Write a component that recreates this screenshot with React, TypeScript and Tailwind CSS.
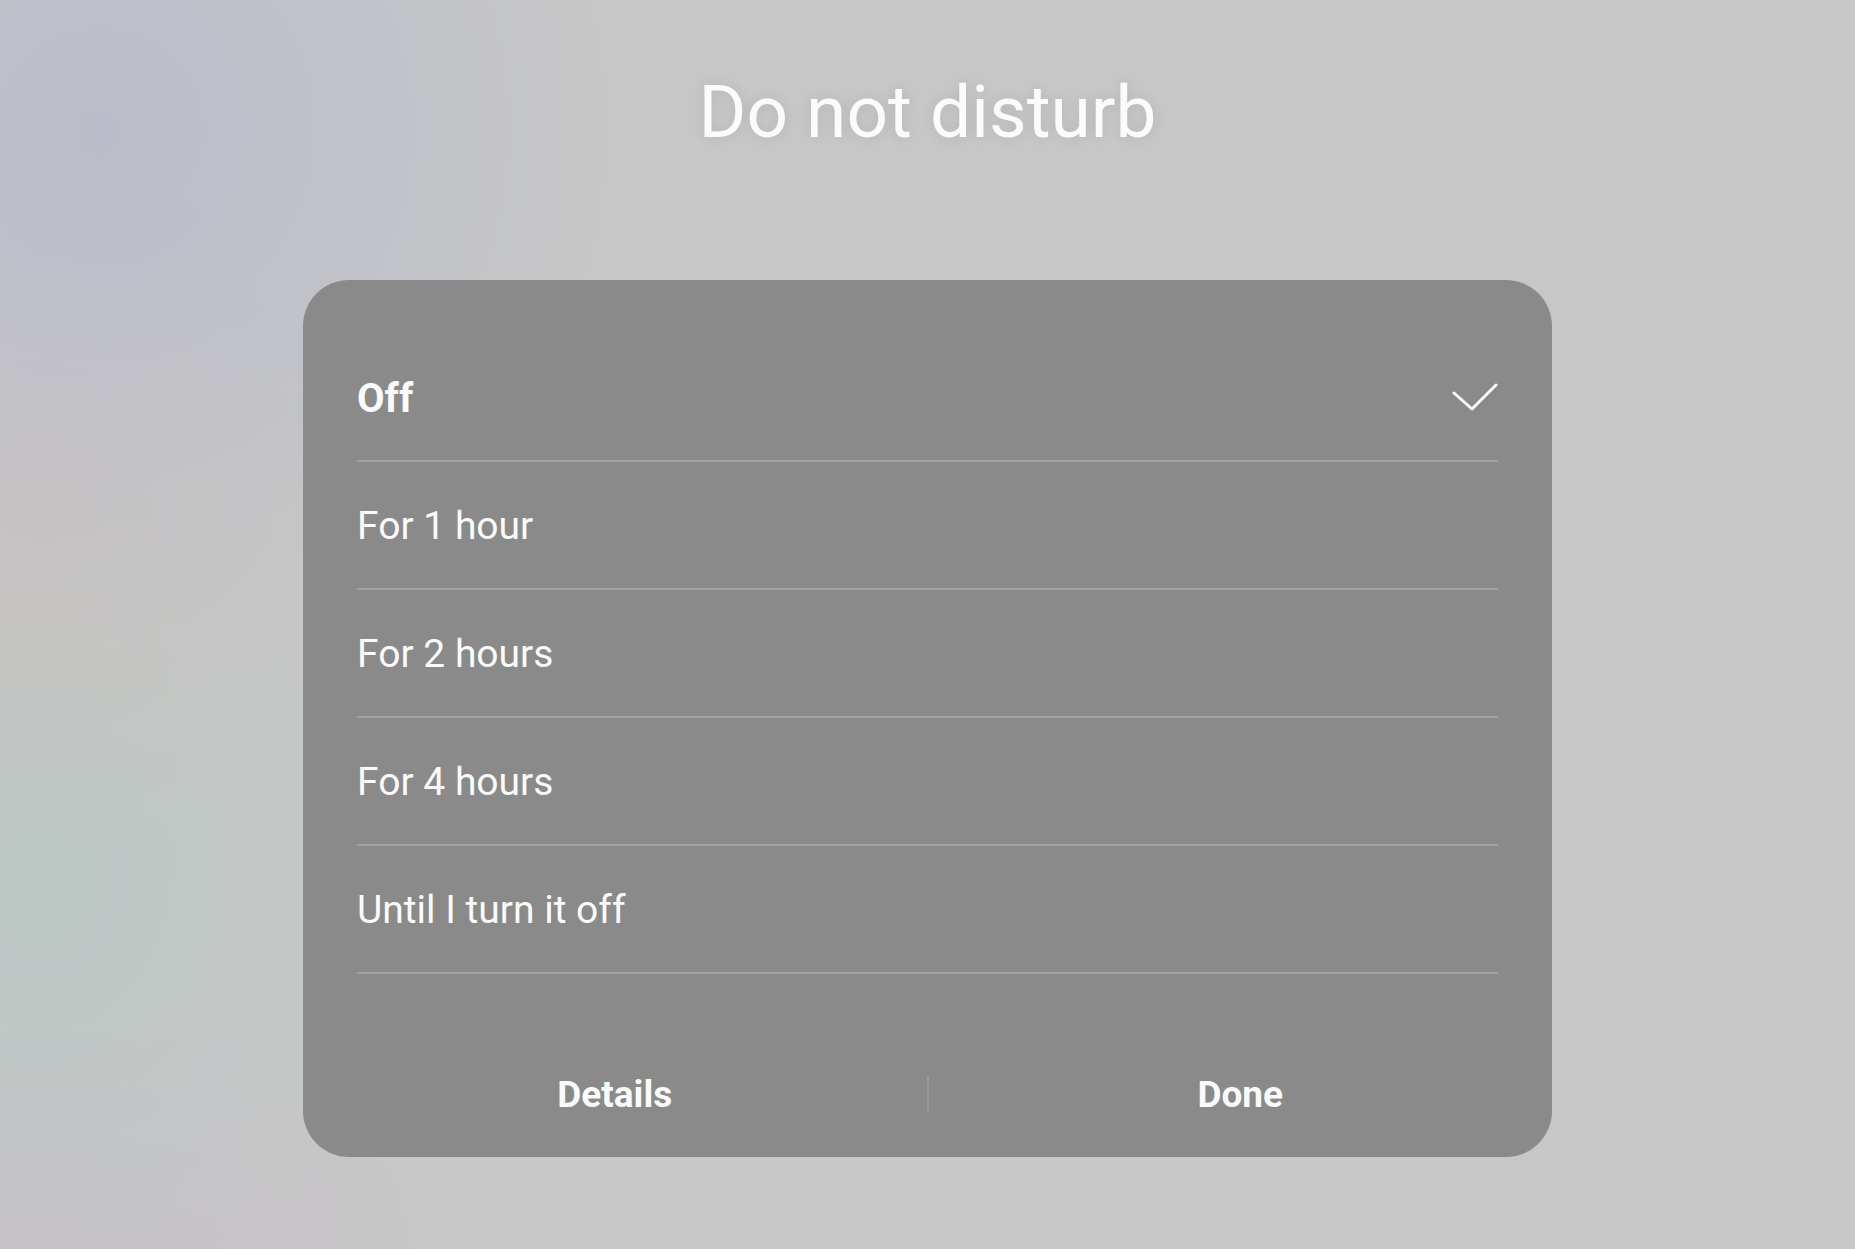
import React from "react";

const options = ["Off", "For 1 hour", "For 2 hours", "For 4 hours", "Until I turn it off"];

const Check = () => (
  <svg width="46" height="28" viewBox="0 0 46 28" fill="none">
    <polyline
      points="2,10 20,26 44,2"
      stroke="#fafafa"
      strokeWidth="3"
      strokeLinecap="round"
      strokeLinejoin="round"
    />
  </svg>
);

export default function App() {
  const selected = 0;

  return (
    <div
      className="flex h-[1249px] w-full flex-col items-center overflow-hidden bg-[#c7c7c7] bg-[image:radial-gradient(ellipse_520px_520px_at_100px_130px,rgba(184,188,202,0.85)_0%,transparent_100%),radial-gradient(ellipse_320px_360px_at_40px_500px,rgba(202,194,192,0.8)_0%,transparent_100%),radial-gradient(ellipse_360px_480px_at_40px_860px,rgba(186,200,196,0.85)_0%,transparent_100%),radial-gradient(ellipse_380px_260px_at_40px_1249px,rgba(200,192,200,0.9)_0%,transparent_100%)]"
      style={{ fontFamily: "Roboto, 'Noto Sans', sans-serif" }}
    >
      <h1 className="mt-[76px] text-[73px] leading-none font-normal text-[#fbfbfb] [text-shadow:0_0_14px_rgba(0,0,0,0.1)]">
        Do not disturb
      </h1>

      <div className="mt-[131px] flex w-[1249px] flex-col rounded-[46px] bg-[#8a8a8a] px-[54px] pt-[54px] pb-[27px]">
        {options.map((label, i) => (
          <div
            key={label}
            className="flex h-[128px] items-center justify-between border-b-2 border-white/20"
          >
            <span
              className={`pt-[3px] text-[#fafafa] ${
                i === selected ? "text-[40px] font-bold" : "text-[39px] font-normal"
              }`}
            >
              {label}
            </span>
            {i === selected && <Check />}
          </div>
        ))}

        <div className="-mx-[54px] mt-[84px] flex h-[72px] items-center">
          <button className="flex-1 pt-[2px] text-[37px] font-bold text-[#fafafa]">Details</button>
          <div className="h-[36px] w-[2px] bg-white/15" />
          <button className="flex-1 pt-[2px] text-[37px] font-bold text-[#fafafa]">Done</button>
        </div>
      </div>
    </div>
  );
}
